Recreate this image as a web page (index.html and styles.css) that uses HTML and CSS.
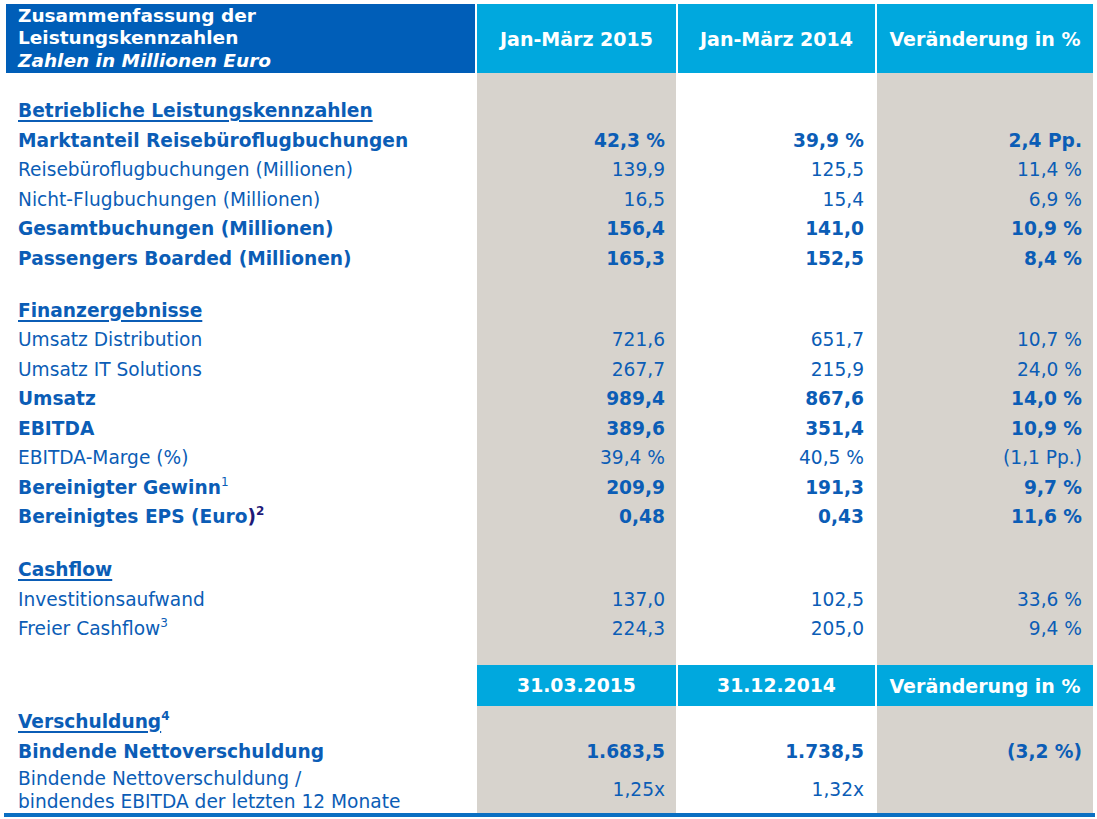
FILE: index.html
```html
<!DOCTYPE html>
<html lang="de">
<head>
<meta charset="utf-8">
<title>Zusammenfassung der Leistungskennzahlen</title>
<link rel="stylesheet" href="styles.css">
</head>
<body>
<table class="kpi">
  <colgroup>
    <col class="c-label">
    <col class="c-a">
    <col class="c-b">
    <col class="c-c">
  </colgroup>
  <tr class="head">
    <th class="title">Zusammenfassung der<br>Leistungskennzahlen<br><em>Zahlen in Millionen Euro</em></th>
    <th class="hcell">Jan-März 2015</th>
    <th class="hcell">Jan-März 2014</th>
    <th class="hcell">Veränderung in %</th>
  </tr>
  <tr class="spacer s23"><td></td><td class="g"></td><td></td><td class="g"></td></tr>
  <tr class="sec"><td><span class="ul">Betriebliche Leistungskennzahlen</span></td><td class="g"></td><td></td><td class="g"></td></tr>
  <tr class="b"><td>Marktanteil Reisebüroflugbuchungen</td><td class="g">42,3 %</td><td>39,9 %</td><td class="g">2,4 Pp.</td></tr>
  <tr><td>Reisebüroflugbuchungen (Millionen)</td><td class="g">139,9</td><td>125,5</td><td class="g">11,4 %</td></tr>
  <tr><td>Nicht-Flugbuchungen (Millionen)</td><td class="g">16,5</td><td>15,4</td><td class="g">6,9 %</td></tr>
  <tr class="b"><td>Gesamtbuchungen (Millionen)</td><td class="g">156,4</td><td>141,0</td><td class="g">10,9 %</td></tr>
  <tr class="b"><td>Passengers Boarded (Millionen)</td><td class="g">165,3</td><td>152,5</td><td class="g">8,4 %</td></tr>
  <tr class="spacer s22"><td></td><td class="g"></td><td></td><td class="g"></td></tr>
  <tr class="sec"><td><span class="ul">Finanzergebnisse</span></td><td class="g"></td><td></td><td class="g"></td></tr>
  <tr><td>Umsatz Distribution</td><td class="g">721,6</td><td>651,7</td><td class="g">10,7 %</td></tr>
  <tr><td>Umsatz IT Solutions</td><td class="g">267,7</td><td>215,9</td><td class="g">24,0 %</td></tr>
  <tr class="b"><td>Umsatz</td><td class="g">989,4</td><td>867,6</td><td class="g">14,0 %</td></tr>
  <tr class="b"><td>EBITDA</td><td class="g">389,6</td><td>351,4</td><td class="g">10,9 %</td></tr>
  <tr><td>EBITDA-Marge (%)</td><td class="g">39,4 %</td><td>40,5 %</td><td class="g">(1,1 Pp.)</td></tr>
  <tr class="b"><td>Bereinigter Gewinn<sup class="light">1</sup></td><td class="g">209,9</td><td>191,3</td><td class="g">9,7 %</td></tr>
  <tr class="b"><td>Bereinigtes EPS (Euro<span class="navy">)<sup>2</sup></span></td><td class="g">0,48</td><td>0,43</td><td class="g">11,6 %</td></tr>
  <tr class="spacer s23"><td></td><td class="g"></td><td></td><td class="g"></td></tr>
  <tr class="sec"><td><span class="ul">Cashflow</span></td><td class="g"></td><td></td><td class="g"></td></tr>
  <tr><td>Investitionsaufwand</td><td class="g">137,0</td><td>102,5</td><td class="g">33,6 %</td></tr>
  <tr><td>Freier Cashflow<sup>3</sup></td><td class="g">224,3</td><td>205,0</td><td class="g">9,4 %</td></tr>
  <tr class="spacer s21"><td></td><td class="g"></td><td></td><td class="g"></td></tr>
  <tr class="head2"><td></td><th class="hcell">31.03.2015</th><th class="hcell">31.12.2014</th><th class="hcell">Veränderung in %</th></tr>
  <tr class="sec sec2"><td><span class="ul">Verschuldung</span><sup class="bsup">4</sup></td><td class="g"></td><td></td><td class="g"></td></tr>
  <tr class="b"><td>Bindende Nettoverschuldung</td><td class="g">1.683,5</td><td>1.738,5</td><td class="g">(3,2 %)</td></tr>
  <tr class="two"><td>Bindende Nettoverschuldung /<br>bindendes EBITDA der letzten 12 Monate</td><td class="g">1,25x</td><td>1,32x</td><td class="g"></td></tr>
</table>
</body>
</html>
```

FILE: styles.css
```css
html, body {
  margin: 0;
  padding: 0;
  background: #ffffff;
}

body {
  padding: 4px 0 0 4px;
  font-family: "DejaVu Sans", Verdana, sans-serif;
  color: #0b5db6;
}

.kpi {
  border-collapse: separate;
  border-spacing: 2px 0;
  width: 1089px;
  table-layout: fixed;
  border-bottom: 4px solid #0a6fc2;
  font-size: 18.6px;
}

.c-label { width: 469px; }
.c-a { width: 199px; }
.c-b { width: 197px; }
.c-c { width: 216px; }

.kpi td, .kpi th {
  padding: 0;
  vertical-align: middle;
  white-space: nowrap;
}

.kpi td {
  text-align: right;
  padding-right: 11px;
  height: 29.5px;
  line-height: 22px;
}

.kpi td:first-child {
  text-align: left;
  padding-left: 12px;
  padding-right: 0;
}

.g { background: #d7d3cd; }

.head th { height: 69px; }

.title {
  background: #005eb8;
  color: #ffffff;
  text-align: left;
  padding-left: 12px !important;
  font-weight: bold;
  font-size: 18.5px;
  line-height: 22.5px;
}

.title em { font-style: italic; }

.hcell {
  background: #00a8de;
  color: #ffffff;
  font-weight: bold;
  font-size: 19px;
  text-align: center;
}

.head2 th { height: 41px; font-size: 18.8px; }
.head2 th:last-child { font-size: 19px; }
.head2 td { height: 41px; }

.spacer td { height: 23px; }
.spacer.s22 td { height: 22px; }
.spacer.s21 td { height: 21px; }

.sec td { height: 30px; font-weight: bold; }
.sec2 td { height: 31px; }

.ul {
  text-decoration: underline;
  text-decoration-thickness: 2px;
  text-underline-offset: 3px;
}

.b td { font-weight: bold; }

sup {
  font-size: 12px;
  line-height: 0;
  vertical-align: 8px;
}

sup.light { font-weight: normal; }

.bsup { font-weight: bold; }

.navy { color: #1e1a78; }

.two td { height: 44px; line-height: 23px; }
```
